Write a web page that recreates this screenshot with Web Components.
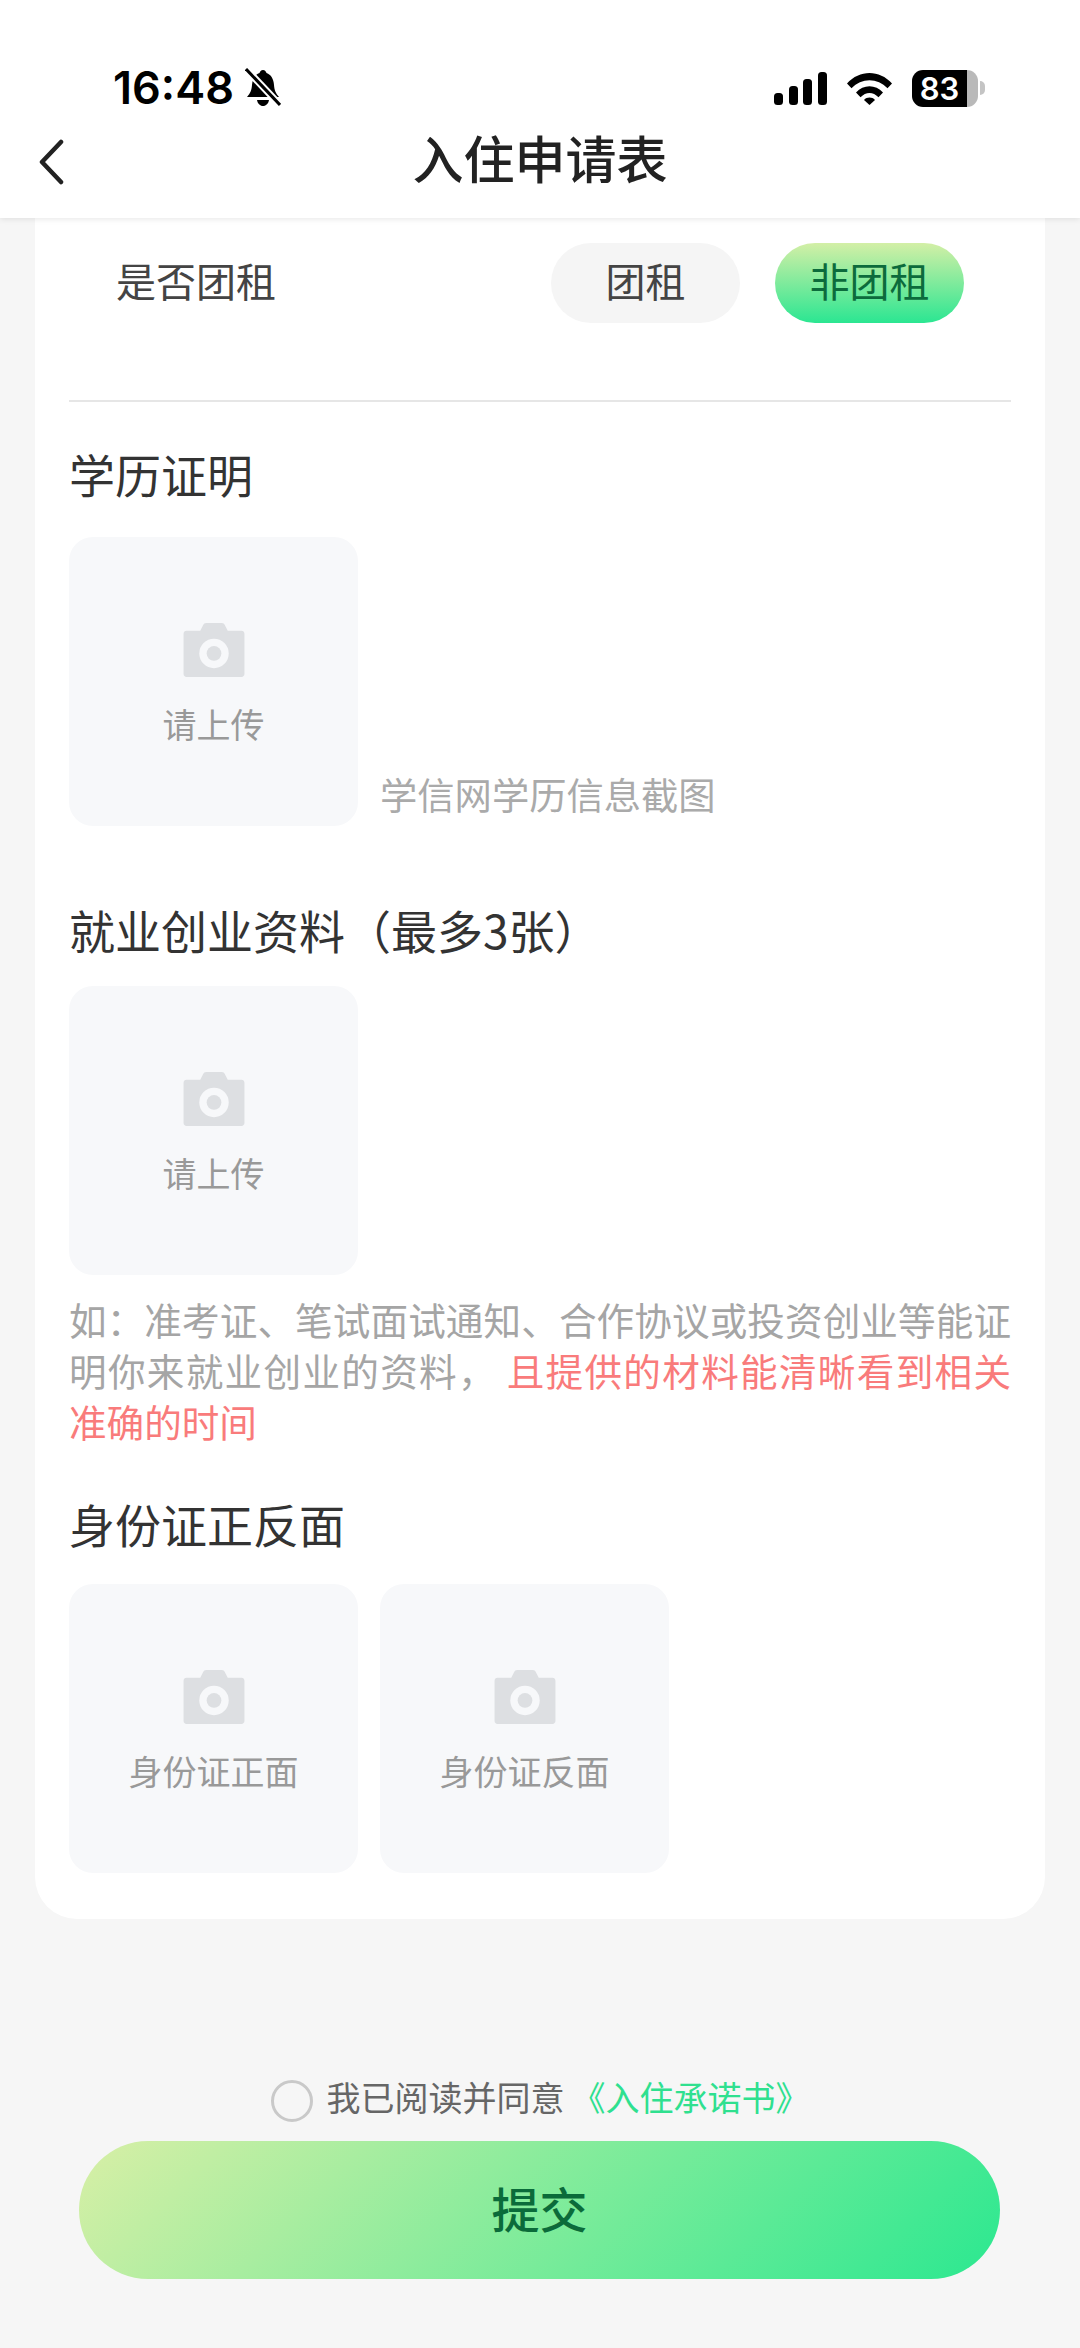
<!DOCTYPE html>
<html lang="zh-CN">
<head>
<meta charset="utf-8">
<title>入住申请表</title>
<style>
    html, body { margin: 0; padding: 0; }
    body {
        min-height: 2348px;
        background: #f6f6f6;
        color: #333;
        font-family: "Noto Sans CJK SC", "Noto Sans", sans-serif;
        overflow-x: hidden;
    }
</style>
</head>
<body>
<app-header title="入住申请表"></app-header>

<form-card>
    <choice-row label="是否团租">
        <choice-pill>团租</choice-pill>
        <choice-pill active>非团租</choice-pill>
    </choice-row>

    <form-section heading="学历证明" top="41" gap="34">
        <upload-tile>请上传</upload-tile>
        <span slot="hint">学信网学历信息截图</span>
    </form-section>

    <form-section heading="就业创业资料（最多3张）" top="73" gap="27">
        <upload-tile>请上传</upload-tile>
        <div slot="note">
            <div>如：准考证、笔试面试通知、合作协议或投资创业等能证</div>
            <div>明你来就业创业的资料， <span style="color:#f97b7b">且提供的材料能清晰看到相关</span></div>
            <div style="color:#f97b7b;text-align-last:left">准确的时间</div>
        </div>
    </form-section>

    <form-section heading="身份证正反面" top="47" gap="31">
        <upload-tile>身份证正面</upload-tile>
        <upload-tile>身份证反面</upload-tile>
    </form-section>
</form-card>

<agree-row link="《入住承诺书》">我已阅读并同意</agree-row>
<submit-button>提交</submit-button>

<script>
/**
 * Top white bar: status bar plus title row
 */
const headerTmpl = document.createElement('template');
headerTmpl.innerHTML = `
    <style>
        :host { display: block; position: relative; z-index: 2; height: 218px; box-sizing: border-box; padding-top: 60px; background: #fff; box-shadow: 0 1px 6px rgba(0,0,0,.1); }
        .status { display: flex; align-items: center; justify-content: space-between; height: 56px; padding: 0 95px 0 113px; }
        .left, .right { display: flex; align-items: center; }
        .time { font: 600 45px/56px Inter, "Liberation Sans", sans-serif; color: #000; }
        .bell { margin-left: 11px; }
        .wifi { margin: 0 20px; }
        .battery { position: relative; display: flex; width: 66px; height: 37px; border-radius: 11px; overflow: hidden; background: linear-gradient(90deg, #000 83%, #b9b9b9 83%); color: #fff; }
        .battery span { width: 55px; text-align: center; font: 600 31px/37px Inter, "Liberation Sans", sans-serif; }
        .nub { width: 5px; height: 14px; margin-left: 2px; border-radius: 0 5px 5px 0; background: #c4c4c4; }
        .nav { position: relative; display: flex; align-items: center; justify-content: center; height: 72px; margin-top: 10px; }
        .back { position: absolute; left: 37px; top: 13px; }
        h1 { margin: 0; padding-bottom: 9px; font-size: 51px; line-height: 63px; font-weight: 500; color: #222; }
    </style>
    <div class="status">
        <div class="left">
            <span class="time">16:48</span>
            <svg class="bell" width="36" height="40" viewBox="0 0 36 40">
                <path d="M18 2c2 0 3 1.500 3.500 3C26 6.500 28.500 11 29 17c.4 5 1.500 8 5 12H2c3.500-4 4.600-7 5-12 .5-6 3-10.500 7.500-12C15 3.500 16 2 18 2z" fill="#000"/>
                <path d="M12 32h12c-.6 3.500-3 6-6 6s-5.400-2.500-6-6z" fill="#000"/>
                <path d="M1 1l34 36" stroke="#fff" stroke-width="7"/>
                <path d="M1 1l34 36" stroke="#000" stroke-width="3"/>
            </svg>
        </div>
        <div class="right">
            <svg width="53" height="33" viewBox="0 0 53 33" fill="#000">
                <rect x="0" y="21" width="9" height="12" rx="3.500"/>
                <rect x="15" y="14" width="9" height="19" rx="3.500"/>
                <rect x="29" y="7" width="9" height="26" rx="3.500"/>
                <rect x="44" y="0" width="9" height="33" rx="3.500"/>
            </svg>
            <svg class="wifi" width="45" height="33" viewBox="0 0 45 33">
                <path d="M0 11.500C12.500 -2.500 32.500 -2.500 45 11.500l-4.500 4.700C30.500 5.500 14.500 5.500 4.500 16.200z" fill="#000"/>
                <path d="M9 20.500C16.500 12 28.500 12 36 20.500l-4.500 4.700C26 19.500 19 19.500 13.500 25.200z" fill="#000"/>
                <path d="M17 28c3-3.200 8-3.200 11 0l-5.500 5z" fill="#000"/>
            </svg>
            <div class="battery"><span>83</span></div>
            <div class="nub"></div>
        </div>
    </div>
    <div class="nav">
        <svg class="back" width="28" height="46" viewBox="0 0 28 46" fill="none"><path d="M24 3L5 23l19 20" stroke="#222" stroke-width="4.500" stroke-linecap="round" stroke-linejoin="round"/></svg>
        <h1></h1>
    </div>
`;

window.customElements.define('app-header', class AppHeader extends HTMLElement {
    constructor() {
        super();
        const shadowRoot = this.attachShadow({mode: 'open'});
        shadowRoot.appendChild(headerTmpl.content.cloneNode(true));
        shadowRoot.querySelector('h1').textContent = this.getAttribute('title');
    }
});

/**
 * White card holding the whole form
 */
const cardTmpl = document.createElement('template');
cardTmpl.innerHTML = `
    <style>
        :host { display: block; margin: 0 35px; padding: 25px 34px 46px; background: #fff; border-radius: 0 0 42px 42px; }
    </style>
    <slot></slot>
`;

window.customElements.define('form-card', class FormCard extends HTMLElement {
    constructor() {
        super();
        this.attachShadow({mode: 'open'}).appendChild(cardTmpl.content.cloneNode(true));
    }
});

/**
 * Question row with pills, the divider sits under it
 */
const rowTmpl = document.createElement('template');
rowTmpl.innerHTML = `
    <style>
        :host { display: block; }
        .row { display: flex; align-items: center; height: 80px; padding: 0 47px; }
        .label { flex: 1; padding-bottom: 5px; font-size: 40px; color: #444; line-height: 75px; }
        .pills { display: flex; gap: 35px; }
        hr { height: 2px; margin: 77px 0 0; border: 0; background: #e6e6e6; }
    </style>
    <div class="row">
        <div class="label"></div>
        <div class="pills"><slot></slot></div>
    </div>
    <hr>
`;

window.customElements.define('choice-row', class ChoiceRow extends HTMLElement {
    constructor() {
        super();
        const shadowRoot = this.attachShadow({mode: 'open'});
        shadowRoot.appendChild(rowTmpl.content.cloneNode(true));
        shadowRoot.querySelector('.label').textContent = this.getAttribute('label');
    }
});

const pillTmpl = document.createElement('template');
pillTmpl.innerHTML = `
    <style>
        :host { display: flex; align-items: center; justify-content: center; width: 189px; height: 80px; box-sizing: border-box; padding-bottom: 5px; border-radius: 40px; background: #f5f5f5; color: #444; font-size: 40px; line-height: 75px; }
        :host([active]) { background: linear-gradient(180deg, #d3efa6, #2be692); color: #0c6b3c; }
    </style>
    <slot></slot>
`;

window.customElements.define('choice-pill', class ChoicePill extends HTMLElement {
    constructor() {
        super();
        this.attachShadow({mode: 'open'}).appendChild(pillTmpl.content.cloneNode(true));
    }
});

/**
 * Section: heading, row of tiles and optional hint/note
 */
const sectionTmpl = document.createElement('template');
sectionTmpl.innerHTML = `
    <style>
        :host { display: block; }
        h2 { margin: 0; font-size: 46px; line-height: 60px; font-weight: 400; color: #333; }
        .tiles { display: flex; gap: 22px; align-items: flex-end; }
        .hint { padding-bottom: 5px; font-size: 37.3px; line-height: 54px; color: #aaa; }
        .note { display: block; margin-top: 18px; font-size: 37.6px; line-height: 51px; color: #a5a5a5; text-align-last: justify; }
        .note:not(.filled) { display: none; }
    </style>
    <h2></h2>
    <div class="tiles">
        <slot></slot>
        <div class="hint"><slot name="hint"></slot></div>
    </div>
    <div class="note"><slot name="note"></slot></div>
`;

window.customElements.define('form-section', class FormSection extends HTMLElement {
    constructor() {
        super();
        const shadowRoot = this.attachShadow({mode: 'open'});
        shadowRoot.appendChild(sectionTmpl.content.cloneNode(true));
        shadowRoot.querySelector('h2').textContent = this.getAttribute('heading');
        shadowRoot.querySelector('h2').style.marginBottom = this.getAttribute('gap') + 'px';
        this.style.marginTop = this.getAttribute('top') + 'px';
        if (this.querySelector('[slot="note"]')) {
            shadowRoot.querySelector('.note').classList.add('filled');
        }
    }
});

/**
 * Empty upload tile with camera icon
 */
const tileTmpl = document.createElement('template');
tileTmpl.innerHTML = `
    <style>
        :host { display: flex; flex-direction: column; align-items: center; width: 289px; height: 289px; box-sizing: border-box; padding-top: 86px; border-radius: 24px; background: #f7f8fa; }
        svg { display: block; }
        .text { margin-top: 23px; font-size: 34px; line-height: 48px; color: #999; white-space: nowrap; }
    </style>
    <svg width="62" height="54" viewBox="0 0 62 55">
        <path d="M3 8h14l3-6c.5-1 1.500-2 3-2h16c1.500 0 2.500 1 3 2l3 6h14c1.700 0 3 1.300 3 3v41c0 1.700-1.300 3-3 3H3c-1.700 0-3-1.300-3-3V11c0-1.700 1.300-3 3-3z" fill="#dddfe2"/>
        <circle cx="31" cy="31" r="15" fill="#f7f8fa"/>
        <circle cx="31" cy="31" r="7.500" fill="#dddfe2"/>
    </svg>
    <div class="text"><slot></slot></div>
`;

window.customElements.define('upload-tile', class UploadTile extends HTMLElement {
    constructor() {
        super();
        this.attachShadow({mode: 'open'}).appendChild(tileTmpl.content.cloneNode(true));
    }
});

/**
 * Agreement line under the card
 */
const agreeTmpl = document.createElement('template');
agreeTmpl.innerHTML = `
    <style>
        :host { display: flex; align-items: center; justify-content: center; height: 44px; margin-top: 157px; padding-bottom: 2px; box-sizing: border-box; font-size: 34px; line-height: 42px; color: #666; }
        .circle { width: 42px; height: 42px; box-sizing: border-box; margin: 8px 14px 0 0; border: 3px solid #c9c9c9; border-radius: 50%; }
        .link { margin-left: 7px; color: #2fe08f; }
    </style>
    <div class="circle"></div>
    <slot></slot>
    <span class="link"></span>
`;

window.customElements.define('agree-row', class AgreeRow extends HTMLElement {
    constructor() {
        super();
        const shadowRoot = this.attachShadow({mode: 'open'});
        shadowRoot.appendChild(agreeTmpl.content.cloneNode(true));
        shadowRoot.querySelector('.link').textContent = this.getAttribute('link');
    }
});

const submitTmpl = document.createElement('template');
submitTmpl.innerHTML = `
    <style>
        :host { display: flex; align-items: center; justify-content: center; height: 138px; box-sizing: border-box; margin: 21px 80px 0 79px; padding-bottom: 6px; border-radius: 69px; background: linear-gradient(135deg, #d8efa6 0%, #2be890 100%); color: #0b6b3a; font-size: 48px; font-weight: 500; line-height: 132px; }
    </style>
    <slot></slot>
`;

window.customElements.define('submit-button', class SubmitButton extends HTMLElement {
    constructor() {
        super();
        this.attachShadow({mode: 'open'}).appendChild(submitTmpl.content.cloneNode(true));
    }
});
</script>
</body>
</html>
